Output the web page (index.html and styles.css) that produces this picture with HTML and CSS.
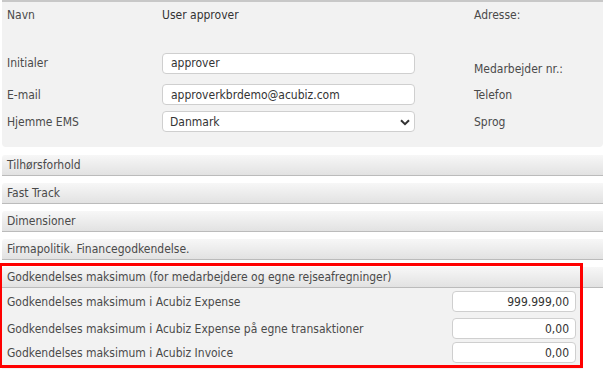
FILE: index.html
```html
<!DOCTYPE html>
<html>
<head>
<title>Medarbejder</title>
<link rel="stylesheet" href="styles.css">
</head>
<body>
<!-- stamdata -->
<div class="panel">
  <div class="row first">
    <span class="lbl">Navn</span>
    <span class="val">User approver</span>
    <span class="lbl">Adresse:</span>
  </div>
  <div class="row r2">
    <span class="lbl">Initialer</span>
    <input class="field" type="text" value="approver">
    <span class="lbl low">Medarbejder nr.:</span>
  </div>
  <div class="row r3">
    <span class="lbl">E-mail</span>
    <input class="field" type="text" value="approverkbrdemo@acubiz.com">
    <span class="lbl">Telefon</span>
  </div>
  <div class="row r4">
    <span class="lbl">Hjemme EMS</span>
    <div class="selectwrap">
      <select class="field sel"><option>Danmark</option></select>
      <svg class="chev" width="10" height="7" viewBox="0 0 10 7"><path d="M1 1.2 L5 5.2 L9 1.2" fill="none" stroke="#333" stroke-width="2"/></svg>
    </div>
    <span class="lbl">Sprog</span>
  </div>
</div>

<!-- sektioner -->
<div class="head">Tilhørsforhold</div>
<div class="head">Fast Track</div>
<div class="head">Dimensioner</div>
<div class="head">Firmapolitik. Financegodkendelse.</div>

<div class="section">
  <div class="head open">Godkendelses maksimum (for medarbejdere og egne rejseafregninger)</div>
  <div class="content">
    <div class="amount a1">
      <span class="lbl">Godkendelses maksimum i Acubiz Expense</span>
      <input class="num" type="text" value="999.999,00">
    </div>
    <div class="amount a2">
      <span class="lbl">Godkendelses maksimum i Acubiz Expense på egne transaktioner</span>
      <input class="num" type="text" value="0,00">
    </div>
    <div class="amount a3">
      <span class="lbl">Godkendelses maksimum i Acubiz Invoice</span>
      <input class="num" type="text" value="0,00">
    </div>
  </div>
  <div class="mark"></div>
</div>
</body>
</html>
```

FILE: styles.css
```css
body {
margin: 0;
background: white;
font-family: "DejaVu Sans Condensed", "DejaVu Sans", Verdana, sans-serif;
font-size: 12px;
color: #4a4a4a;
overflow: hidden;
}
.panel {
margin-left: 2px;
height: 147px;
box-sizing: border-box;
background: #f2f2f2;
border-top: 2px solid #c8c8c8;
border-radius: 0 0 4px 4px;
padding: 6px 0 0 5px;
}
.row {
display: grid;
grid-template-columns: 155px 312px 1fr;
justify-items: start;
align-items: center;
height: 21px;
}
.first {
height: 14px;
}
.r2 {
margin-top: 28px;
}
.r3 {
margin-top: 13px;
}
.r4 {
margin-top: 6px;
}
.lbl {
line-height: 14px;
white-space: nowrap;
}
.val {
color: #333;
}
.low {
align-self: start;
margin-top: 12px;
}
.field {
box-sizing: border-box;
width: 253px;
height: 21px;
border: 1px solid #cfcfcf;
border-radius: 4px;
background: white;
font-family: inherit;
font-size: 12px;
color: #333;
padding: 0 8px;
margin: 0;
outline: none;
}
.selectwrap {
position: relative;
height: 21px;
}
.sel {
appearance: none;
-webkit-appearance: none;
padding-left: 7px;
}
.chev {
position: absolute;
right: 5px;
top: 8px;
}
.head {
margin: 8px 0 0 2px;
height: 20px;
line-height: 20px;
padding-left: 5px;
background: linear-gradient(#f7f7f7, #e2e2e2);
border-bottom: 1px solid #bbb;
border-radius: 3px 0 0 0;
white-space: nowrap;
}
.head + .head {
margin-top: 7px;
}
.section {
position: relative;
margin-top: 7px;
}
.section .head {
margin-top: 0;
}
.content {
margin-left: 2px;
width: 581px;
height: 85px;
background: #f2f2f2;
padding: 3px 0 0 5px;
box-sizing: border-box;
}
.amount {
display: grid;
grid-template-columns: 445px 124px;
align-items: center;
height: 21px;
}
.a2 {
margin-top: 6px;
}
.a3 {
margin-top: 3px;
}
.num {
box-sizing: border-box;
width: 124px;
height: 21px;
border: 1px solid #cfcfcf;
border-radius: 4px;
background: white;
font-family: inherit;
font-size: 12px;
color: #333;
text-align: right;
padding: 0 6px;
margin: 0;
outline: none;
}
.mark {
position: absolute;
left: -1px;
top: -4px;
width: 584px;
height: 105px;
box-sizing: border-box;
border: 3px solid #ff0000;
pointer-events: none;
}
```
